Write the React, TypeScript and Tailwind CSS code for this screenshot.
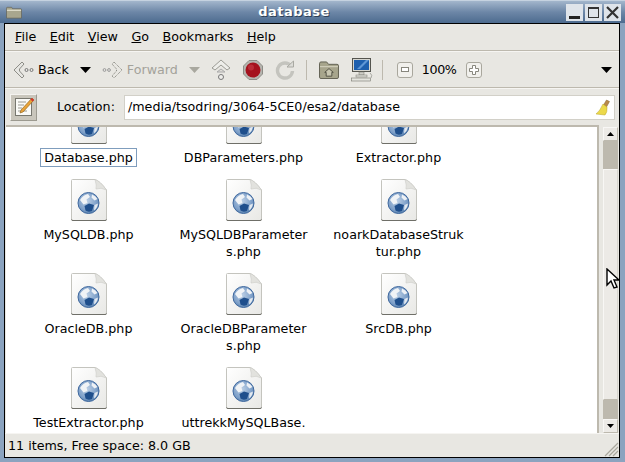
import React from 'react';

const files: { name: string; second?: string }[][] = [
  [{ name: 'Database.php' }, { name: 'DBParameters.php' }, { name: 'Extractor.php' }],
  [{ name: 'MySQLDB.php' }, { name: 'MySQLDBParameter', second: 's.php' }, { name: 'noarkDatabaseStruk', second: 'tur.php' }],
  [{ name: 'OracleDB.php' }, { name: 'OracleDBParameter', second: 's.php' }, { name: 'SrcDB.php' }],
  [{ name: 'TestExtractor.php' }, { name: 'uttrekkMySQLBase.', second: 'php' }],
];

const menus = [
  ['F', 'ile'],
  ['E', 'dit'],
  ['V', 'iew'],
  ['G', 'o'],
  ['B', 'ookmarks'],
  ['H', 'elp'],
];

const PhpIcon = () => (
  <svg width="38" height="44" viewBox="0 0 38 44" className="block">
    <defs>
      <radialGradient id="globe" cx="0.45" cy="0.4" r="0.7">
        <stop offset="0" stopColor="#b9cde4" />
        <stop offset="0.65" stopColor="#7d9fc8" />
        <stop offset="1" stopColor="#42709f" />
      </radialGradient>
      <linearGradient id="page" x1="0" y1="0" x2="1" y2="1">
        <stop offset="0" stopColor="#ffffff" />
        <stop offset="1" stopColor="#e8e8e5" />
      </linearGradient>
    </defs>
    <path d="M1.5 2.5 Q1.5 1.5 2.5 1.5 H25 Q30 3 36.5 12 V41 Q36.5 42.5 35 42.5 H3 Q1.5 42.5 1.5 41 Z" fill="url(#page)" stroke="#c4c4be" />
    <path d="M1.5 41.5 Q1.5 42.5 3 42.5 H35 Q36.5 42.5 36.5 41.5" fill="none" stroke="#6f6f68" />
    <path d="M25 1.5 Q27 8 26 11 Q31 9 36.5 12 Q30 3 25 1.5 Z" fill="#e2e2de" stroke="#cfcfca" strokeWidth="0.7" />
    <circle cx="18.5" cy="25" r="10.5" fill="url(#globe)" stroke="#3f689e" />
    <path d="M10 22 Q13 17 18 16 L20 19 L16.5 21.5 L17.5 25 L13.5 26.5 Z" fill="#f0f3f6" />
    <path d="M22 16.5 Q26 18 27.5 21 L24.5 22.5 L21.5 19.5 Z" fill="#eef1f5" />
    <path d="M14.5 28 L19 25.5 L24 27 L22 33 Q18 34.5 15.5 32.5 Z" fill="#1f4f8c" />
    <path d="M24.5 27 L28 25.5 Q27.5 30 24 32.5 Z" fill="#e3e9f0" />
  </svg>
);

const Triangle = ({ disabled = false }: { disabled?: boolean }) => (
  <svg width="11" height="6" viewBox="0 0 11 6" className="block">
    <path d="M0 0 H11 L5.5 6 Z" fill={disabled ? '#a9a89f' : '#000'} />
  </svg>
);

const Separator = () => <div className="w-px h-[20px] bg-[#bdb9ae] shrink-0" />;

const ScrollArrow = ({ up }: { up: boolean }) => (
  <div className="h-[14px] w-[15px] bg-[#eceae6] border border-[#f8f7f5] border-r-[#bdb9ae] border-b-[#bdb9ae] flex items-center justify-center">
    <svg width="7" height="4" viewBox="0 0 7 4">
      <path d={up ? 'M0 4 H7 L3.5 0 Z' : 'M0 0 H7 L3.5 4 Z'} fill="#000" />
    </svg>
  </div>
);

export default function App() {
  return (
    <div className="w-[625px] h-[462px] flex flex-col overflow-hidden bg-[#8ba3bf] text-[12.7px] text-black font-['DejaVu_Sans',sans-serif] relative">
      {/* title bar */}
      <div className="h-[23px] shrink-0 flex items-center bg-gradient-to-b from-[#a3b6cc] via-[#6d87a7] to-[#4d6b8f] border-t border-t-[#c5d2e0] pl-[6px] pr-[4px]">
        <svg width="16" height="13" viewBox="0 0 17 13" className="shrink-0">
          <path d="M0.5 2 Q0.5 1 1.5 1 H6 L7 2.5 H15.5 Q16.5 2.5 16.5 3.5 V12 Q16.5 12.5 16 12.5 H1 Q0.5 12.5 0.5 12 Z" fill="#a8a68e" stroke="#55544a" strokeWidth="0.6" />
          <rect x="1" y="3.5" width="15" height="1.4" fill="#dcdac8" />
        </svg>
        <div className="flex-1 text-center font-bold text-white text-[13px] tracking-[0.5px] [text-shadow:1px_1px_0_#2e3f55]">database</div>
        <div className="flex gap-[2px]">
          <div className="w-[17px] h-[17px] bg-[#dfe4ea] flex items-end justify-center pb-[2px]">
            <div className="w-[11px] h-[3px] bg-[#222]" />
          </div>
          <div className="w-[17px] h-[17px] bg-[#dfe4ea] flex items-center justify-center">
            <div className="w-[11px] h-[11px] border border-t-2 border-[#333]" />
          </div>
          <div className="w-[17px] h-[17px] bg-[#dfe4ea] flex items-center justify-center">
            <svg width="13" height="13" viewBox="0 0 13 13">
              <path d="M1 1 L12 12 M12 1 L1 12" stroke="#333" strokeWidth="2.2" />
            </svg>
          </div>
        </div>
      </div>

      {/* window body */}
      <div className="flex-1 min-h-0 ml-[4px] mr-[5px] mb-[4px] border border-black bg-[#e8e7e2] flex flex-col">
        {/* menu bar */}
        <div className="h-[27px] shrink-0 flex items-center gap-[13.5px] pl-[10px] border-b border-b-[#bdb9ae]">
          {menus.map(([key, rest]) => (
            <span key={key}>
              <span className="underline">{key}</span>
              {rest}
            </span>
          ))}
        </div>

        {/* toolbar */}
        <div className="h-[37px] shrink-0 flex items-center border-t border-t-[#f6f5f2] border-b border-b-[#bdb9ae] pl-[7px]">
          <svg width="23" height="20" viewBox="0 0 23 20" className="shrink-0">
            <path d="M10 2 L2 10 L10 18 L12 16 L7.5 11 L7.5 9 L12 4 Z" fill="#e6e6e2" stroke="#8d8d86" />
            <circle cx="14.5" cy="10" r="1.5" fill="none" stroke="#777" />
            <circle cx="19.5" cy="10" r="1.5" fill="none" stroke="#777" />
          </svg>
          <span className="ml-[3px]">Back</span>
          <div className="ml-[11px] flex">
            <Triangle />
          </div>
          <svg width="22" height="20" viewBox="0 0 22 20" className="ml-[11px] shrink-0">
            <path d="M12 2 L20 10 L12 18 L10 16 L14.5 11 L14.5 9 L10 4 Z" fill="#e8e7e2" stroke="#8d8d86" strokeDasharray="1.2 0.8" />
            <circle cx="2.5" cy="10" r="1.4" fill="none" stroke="#999" />
            <circle cx="7" cy="10" r="1.4" fill="none" stroke="#999" />
          </svg>
          <span className="ml-[3px] text-[#a3a29a]">Forward</span>
          <div className="ml-[11px] flex">
            <Triangle disabled />
          </div>
          <svg width="20" height="22" viewBox="0 0 20 22" className="ml-[11px] shrink-0">
            <path d="M10 1 L19 9 L16 11 L10 6 L4 11 L1 9 Z" fill="#eeeeea" stroke="#9b9b94" />
            <path d="M10 10 L14 13 H6 Z" fill="#dddcd7" stroke="#aaa" />
            <circle cx="10" cy="18" r="2.5" fill="#eeeeea" stroke="#777" />
          </svg>
          <svg width="22" height="22" viewBox="0 0 22 22" className="ml-[11px] shrink-0">
            <path d="M7 1.5 H15 L20.5 7 V15 L15 20.5 H7 L1.5 15 V7 Z" fill="#b5b4ae" stroke="#8d8d86" />
            <circle cx="11" cy="11" r="7.5" fill="#a5121d" />
            <circle cx="9" cy="8.5" r="3" fill="#c8404a" opacity="0.6" />
          </svg>
          <svg width="20" height="20" viewBox="0 0 20 20" className="ml-[11px] shrink-0">
            <path d="M16 6 A7.5 7.5 0 1 0 17.5 11" fill="none" stroke="#c4c4be" strokeWidth="3.4" />
            <path d="M12 7 H18.5 V1 Z" fill="#dcdcd7" stroke="#a9a9a2" />
          </svg>
          <div className="ml-[11px] flex">
            <Separator />
          </div>
          <svg width="20" height="18" viewBox="0 0 21 19" className="ml-[12px] shrink-0">
            <path d="M0.5 3 Q0.5 1 2 1 H8 L10 3.5 H19 Q20.5 3.5 20.5 5 V17 Q20.5 18.5 19 18.5 H2 Q0.5 18.5 0.5 17 Z" fill="#a7a58c" stroke="#5f5e50" />
            <path d="M1 6 H20" stroke="#d9d7c4" />
            <path d="M6 12 L10.5 8 L15 12 H13.5 V16 H7.5 V12 Z" fill="#c8c6b0" stroke="#4f4e42" />
          </svg>
          <svg width="22" height="24" viewBox="0 0 22 24" className="ml-[12px] shrink-0">
            <rect x="1.5" y="0.5" width="18" height="13" fill="#d6d6d0" stroke="#55554f" />
            <rect x="3" y="2" width="15" height="10" fill="#1d5fae" />
            <path d="M6 11 L15 2 H18 L9 11 Z" fill="#5f97d6" />
            <rect x="8" y="14" width="5" height="3" fill="#cfcfc9" stroke="#77776f" strokeWidth="0.5" />
            <rect x="5" y="17" width="11" height="2" fill="#deded8" stroke="#77776f" strokeWidth="0.5" />
            <rect x="0.5" y="20" width="19" height="3" fill="#e4e4de" stroke="#77776f" strokeWidth="0.6" />
            <path d="M19 15 Q22 17 20 20" fill="none" stroke="#a9a9a2" />
          </svg>
          <div className="ml-[9px] flex">
            <Separator />
          </div>
          <div className="ml-[14px] w-[16px] h-[16px] rounded-[3px] border border-[#a9a79d] bg-[#f1f0ec] flex items-center justify-center">
            <div className="w-[8px] h-[5px] border border-[#88877d] bg-white" />
          </div>
          <span className="ml-[9px] tracking-[-0.4px]">100%</span>
          <div className="ml-[9px] w-[16px] h-[16px] rounded-[3px] border border-[#a9a79d] bg-[#f1f0ec] flex items-center justify-center">
            <svg width="10" height="10" viewBox="0 0 10 10">
              <path d="M3.5 0.5 H6.5 V3.5 H9.5 V6.5 H6.5 V9.5 H3.5 V6.5 H0.5 V3.5 H3.5 Z" fill="#fff" stroke="#88877d" />
            </svg>
          </div>
          <div className="ml-auto mr-[7px] flex">
            <Triangle />
          </div>
        </div>

        {/* location bar */}
        <div className="h-[37px] shrink-0 flex items-center border-t border-t-[#f6f5f2] pl-[5px] pr-[4px]">
          <div className="w-[27px] h-[27px] bg-[#c9c6bc] border border-[#f4f3f0] border-r-[#9c9a90] border-b-[#9c9a90] flex items-center justify-center">
            <svg width="22" height="22" viewBox="0 0 22 22">
              <rect x="2.5" y="2.5" width="16" height="17" fill="#fafaf7" stroke="#77776f" />
              <path d="M5 6 H13 M5 9 H11 M5 12 H9 M5 15 H14" stroke="#9a9a92" />
              <path d="M19 2 L21 4 L10 16 L7 17 L8 14 Z" fill="#e8a33a" stroke="#8a5a10" strokeWidth="0.6" />
              <path d="M19 2 L21 4 L19.5 5.6 L17.5 3.6 Z" fill="#d5322f" />
            </svg>
          </div>
          <span className="ml-[20px]">Location:</span>
          <div className="ml-[9px] flex-1 h-[25px] bg-white border border-[#d2d0c8] flex items-center pl-[3px] pr-[3px]">
            <span className="flex-1">/media/tsodring/3064-5CE0/esa2/database</span>
            <svg width="16" height="17" viewBox="0 0 16 17">
              <path d="M11.5 1 L14.5 2.5 L11.5 8 L8.5 6 Z" fill="#b88a4a" stroke="#86622e" strokeWidth="0.5" />
              <path d="M8 5 L12 8 Q12.5 13 10 16 L1 15 Q5 12 8 5 Z" fill="#ecd94a" stroke="#b9a52a" strokeWidth="0.5" />
            </svg>
          </div>
        </div>

        {/* content + scrollbar */}
        <div className="flex-1 min-h-0 flex pl-[1px]">
          <div className="flex-1 min-w-0 bg-white border-t-2 border-r-2 border-[#bdb9ae] overflow-hidden">
            <div className="mt-[-26px] pl-[5px]">
              {files.map((row, r) => (
                <div key={r} className="grid grid-cols-[155px_155px_155px]">
                  {row.map((f) => (
                    <div key={f.name} className={`flex flex-col items-center ${f.second || r === 1 || r === 2 ? 'h-[94px]' : r === 0 ? 'h-[77px]' : ''}`}>
                      <PhpIcon />
                      <div
                        className={`mt-[3px] leading-[17px] text-center px-[3px] whitespace-pre ${
                          f.name === 'Database.php' ? 'border border-[#7f9dbd]' : 'border border-transparent'
                        }`}
                      >
                        {f.name}
                        {f.second ? `\n${f.second}` : ''}
                      </div>
                    </div>
                  ))}
                </div>
              ))}
            </div>
          </div>
          <div className="w-[20px] shrink-0 pl-[4px] pr-[1px] pt-[2px] flex flex-col">
            <ScrollArrow up />
            <div className="flex-1 min-h-0 flex flex-col bg-[#bdb9ae]">
              <div className="mt-[28px] mb-[19px] flex-1 bg-[#eceae6] border border-[#f8f7f5] border-r-[#d8d6cf] border-b-[#bdb9ae]" />
            </div>
            <ScrollArrow up={false} />
          </div>
        </div>

        {/* status bar */}
        <div className="h-[24px] shrink-0 flex items-center pl-[3px] border-t border-t-[#f6f5f2] relative">
          <span>11 items, Free space: 8.0 GB</span>
          <svg width="16" height="16" viewBox="0 0 16 16" className="absolute right-0 bottom-0">
            <path d="M15 2 L2 15 M15 6 L6 15 M15 10 L10 15" stroke="#a9a79d" strokeWidth="1.2" />
          </svg>
        </div>
      </div>

      {/* mouse pointer */}
      <svg width="14" height="22" viewBox="0 0 14 22" className="absolute left-[606px] top-[268px]">
        <path d="M1 1 V17 L5 13 L8 20 L11 19 L8 12 L13 12 Z" fill="#fff" stroke="#000" strokeWidth="1.4" />
      </svg>
    </div>
  );
}
